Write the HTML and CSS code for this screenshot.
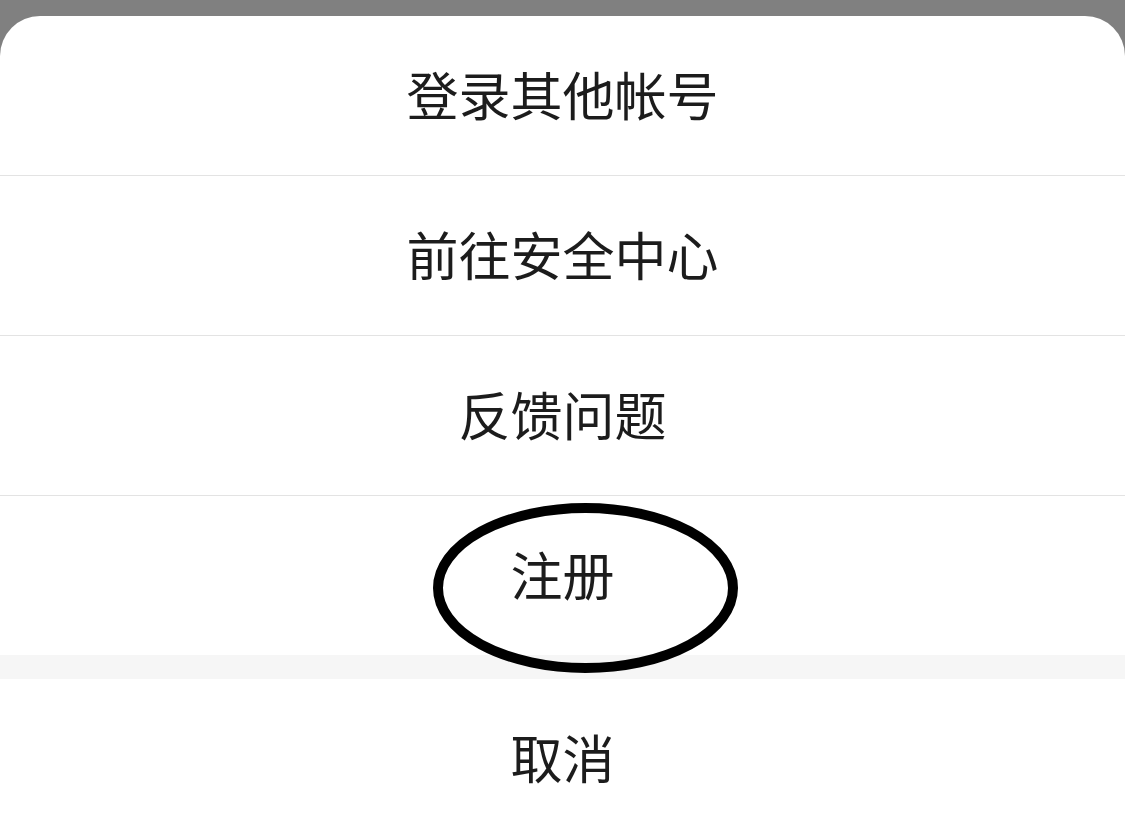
FILE: index.html
```html
<!DOCTYPE html>
<html lang="zh-CN">
<head>
<meta charset="utf-8">
<link rel="stylesheet" href="styles.css">
</head>
<body>
<div class="backdrop"></div>
<div class="sheet">
  <div class="item">登录其他帐号</div>
  <div class="item">前往安全中心</div>
  <div class="item">反馈问题</div>
  <div class="item item-last">注册
    <svg class="circle" width="305" height="170" viewBox="0 0 305 170"><ellipse cx="152.5" cy="85" rx="147.5" ry="80" fill="none" stroke="#000" stroke-width="10"/></svg>
  </div>
  <div class="gap"></div>
  <div class="item cancel">取消</div>
</div>
</body>
</html>
```
FILE: styles.css
```css
html, body {
  margin: 0;
  padding: 0;
  background: #808080;
  overflow: hidden;
  height: 825px;
}
.backdrop {
  height: 16px;
}
.sheet {
  background: #fff;
  border-radius: 40px 40px 0 0;
  overflow: hidden;
  height: 809px;
}
.item {
  box-sizing: border-box;
  height: 160px;
  padding-bottom: 5px;
  border-bottom: 1px solid #e3e3e3;
  display: flex;
  align-items: center;
  justify-content: center;
  font-family: "Noto Sans CJK SC", "Noto Sans", sans-serif;
  font-size: 52px;
  color: #1c1c1c;
  position: relative;
}
.item-last {
  height: 159px;
  border-bottom: none;
}
.gap {
  height: 24px;
  background: #f6f6f6;
}
.cancel {
  height: 160px;
  border-bottom: none;
}
.circle {
  position: absolute;
  left: 433px;
  top: 7px;
}
```
